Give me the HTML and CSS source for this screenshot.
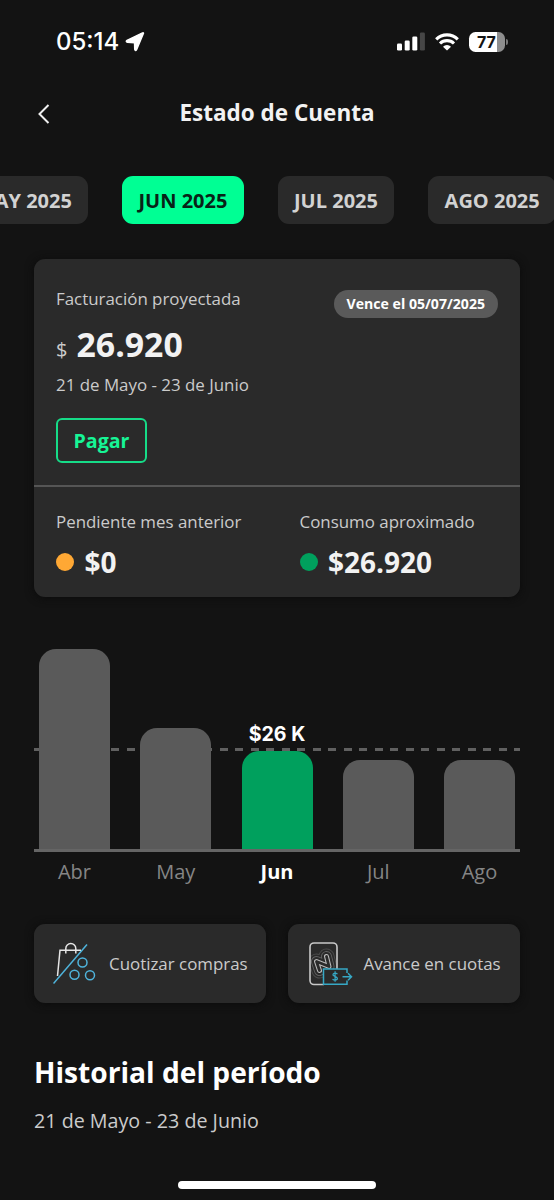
FILE: index.html
```
<!DOCTYPE html>
<html lang="es">
<head>
<meta charset="utf-8">
<title>Estado de Cuenta</title>
<link rel="stylesheet" href="styles.css">
</head>
<body>
<div class="screen">
  <div class="status">
    <span class="time">05:14</span>
    <svg class="loc" width="20" height="20" viewBox="0 0 20 20"><path d="M18.400 1.600 L11.600 17.700 Q10.400 19.600 9.700 17.400 L9.500 10.700 L2.300 10.400 Q0.400 9.400 2 8.300 L17 1.100 Q18.900 0.300 18.400 1.600Z" fill="#fff" stroke="#fff" stroke-width="1.400" stroke-linejoin="round"/></svg>
    <svg class="signal" width="28" height="20" viewBox="0 0 28 20"><g fill="#fff"><rect x="0" y="11.500" width="5" height="7" rx="1.300"/><rect x="7.700" y="8.500" width="5" height="10" rx="1.300"/><rect x="15.300" y="4.500" width="5" height="14" rx="1.300"/></g><rect x="22.900" y="0.500" width="5" height="18" rx="1.300" fill="#464646"/></svg>
    <svg class="wifi" width="24" height="18" viewBox="0 0 24 18"><g fill="none" stroke="#fff" stroke-width="3.100"><path d="M1.200 6.300 A15.400 15.400 0 0 1 22.800 6.300"/><path d="M5 10.500 A10 10 0 0 1 19 10.500"/></g><path d="M12 17.600 L8 13.700 A5.600 5.600 0 0 1 16 13.700Z" fill="#fff"/></svg>
    <div class="battery"><span>77</span></div>
    <i class="nub"></i>
  </div>

  <header class="header">
    <svg class="back" width="12" height="20" viewBox="0 0 12 20"><path d="M10.500 1 L1.500 10 L10.500 19" fill="none" stroke="#f0f0f0" stroke-width="2"/></svg>
    <h1>Estado de Cuenta</h1>
  </header>

  <nav class="months">
    <span class="chip">MAY 2025</span>
    <span class="chip active">JUN 2025</span>
    <span class="chip">JUL 2025</span>
    <span class="chip">AGO 2025</span>
  </nav>

  <section class="card">
    <div class="summary">
      <div class="main">
        <div class="label projected">Facturación proyectada</div>
        <div class="total"><small>$</small><b>26.920</b></div>
        <div class="label period">21 de Mayo - 23 de Junio</div>
        <button class="pay">Pagar</button>
      </div>
      <span class="due">Vence el 05/07/2025</span>
    </div>
    <div class="detail">
      <div><div class="label pending">Pendiente mes anterior</div><div class="value"><i class="dot orange"></i>$0</div></div>
      <div><div class="label approx">Consumo aproximado</div><div class="value"><i class="dot green"></i>$26.920</div></div>
    </div>
  </section>

  <section class="chart">
    <div class="plot">
      <div class="average"></div>
      <div class="bar" style="height:200px"></div>
      <div class="bar" style="height:121px"></div>
      <div class="bar current" style="height:98.500px"><span class="amount">$26 K</span></div>
      <div class="bar" style="height:89.500px"></div>
      <div class="bar" style="height:89.500px"></div>
    </div>
    <div class="axis"><span>Abr</span><span>May</span><b>Jun</b><span>Jul</span><span>Ago</span></div>
  </section>

  <section class="actions">
    <div class="action">
      <svg width="44" height="44" viewBox="0 0 44 44" fill="none" stroke-width="1.500"><g stroke="#e6e6e6"><path d="M4.500 34 L7 8.200 H28"/><path d="M12.800 11.500 V6.500 a5 5 0 0 1 10 0 V11.500"/></g><g stroke="#4fb4dc"><path d="M0.500 41.500 L34 2.500"/><circle cx="29.500" cy="20.500" r="4.500"/><circle cx="21.500" cy="32.700" r="4.500"/><circle cx="37" cy="33.200" r="4.500"/></g></svg>
      <span>Cuotizar compras</span>
    </div>
    <div class="action advance">
      <svg width="44" height="44" viewBox="0 0 44 44" fill="none"><defs><clipPath id="phone"><rect x="1" y="1" width="27" height="42" rx="4"/></clipPath></defs><g clip-path="url(#phone)" stroke-linecap="round" stroke-linejoin="round"><path d="M10.500 28.500 L7.500 19.500 L20 24.500 L17.500 14.500" stroke="#4c4c4c" stroke-width="16"/><path d="M10.500 28.500 L7.500 19.500 L20 24.500 L17.500 14.500" stroke="#2a2a2a" stroke-width="14.200"/><path d="M10.500 28.500 L7.500 19.500 L20 24.500 L17.500 14.500" stroke="#606060" stroke-width="11"/><path d="M10.500 28.500 L7.500 19.500 L20 24.500 L17.500 14.500" stroke="#2a2a2a" stroke-width="9.200"/><path d="M10.500 28.500 L7.500 19.500 L20 24.500 L17.500 14.500" stroke="#b8b8b8" stroke-width="5"/><path d="M10.500 28.500 L7.500 19.500 L20 24.500 L17.500 14.500" stroke="#2a2a2a" stroke-width="2.800"/></g><path d="M15 42.500 H5 a4 4 0 0 1 -4 -4 V5 a4 4 0 0 1 4 -4 H24 a4 4 0 0 1 4 4 V27" stroke="#c8c8c8" stroke-width="1.600"/><path d="M38 31 V27 H14.500 V42.300 H38 V38.500" fill="#2a2a2a" stroke="#36a8c5" stroke-width="1.500"/><path d="M33.500 34.700 H42.500 M39 31.200 L42.500 34.700 L39 38.200" stroke="#36a8c5" stroke-width="1.500"/><path d="M28.500 32.100 Q26 30.300 24.200 32 C22.500 34.300 29 34.300 28.400 37 Q26.200 39.300 23.500 37.300 M26.100 29.300 V39.800" stroke="#36a8c5" stroke-width="1.200"/></svg>
      <span>Avance en cuotas</span>
    </div>
  </section>

  <section class="history">
    <h2>Historial del período</h2>
    <p>21 de Mayo - 23 de Junio</p>
  </section>
  <div class="home"></div>
</div>
</body>
</html>
```
FILE: styles.css
```
* { box-sizing: border-box; }
html, body { margin: 0; background: #131313; }
body { font-family: "Open Sans", sans-serif; color: #f2f2f2; }
.screen { width: 554px; height: 1200px; overflow: hidden; display: flex; flex-direction: column; }

.status { height: 82px; display: flex; align-items: center; padding: 1px 46px 0 56px; flex: none; }
.time { font: 500 24px/30px Inter, sans-serif; color: #fff; letter-spacing: 0; width: 68.500px; white-space: nowrap; }
.loc { margin-right: auto; }
.signal { margin-right: 10px; }
.wifi { margin-right: 10px; }
.battery { width: 36px; height: 20px; border-radius: 6.500px; background: linear-gradient(90deg, #fff 27.500px, #8e8e8e 27.500px); color: #131313; font: 700 16px/20px Inter, sans-serif; padding-left: 8px; }
.nub { width: 2px; height: 6px; border-radius: 0 2px 2px 0; background: #777; margin-left: 1px; }

.header { height: 61px; display: grid; grid-template-columns: 40px 1fr 40px; align-items: center; padding: 0 37px; flex: none; }
.back { margin: 3px 0 0 1px; }
.header h1 { margin: 1px 0 0; font-size: 22.500px; line-height: 30px; font-weight: 700; text-align: center; white-space: nowrap; }

.months { display: flex; gap: 34px; justify-content: flex-start; margin: 33px 0 0 -40.500px; flex: none; }
.chip { flex: none; height: 48px; padding: 0 16.300px; border-radius: 11px; background: #2a2a2a; color: #d2d2d2; font-size: 20px; line-height: 49px; font-weight: 700; white-space: nowrap; }
.chip.active { background: #00ff94; color: #082217; }

.card { margin: 35px 34px 0; height: 338px; border-radius: 11px; background: #2a2a2a; box-shadow: 0 1px 8px #0b0b0b; flex: none; }
.summary { height: 228px; padding: 27.500px 22px 0; display: flex; justify-content: space-between; border-bottom: 2px solid #555; }
.label { font-size: 16.900px; line-height: 24px; color: #cbcbcb; white-space: nowrap; }
.total { display: flex; align-items: baseline; height: 40px; margin: 13px 0 9px; line-height: 40px; }
.total small { font-size: 20px; color: #cbcbcb; width: 20.500px; }
.total b { font-size: 33.800px; }
.pay { display: block; width: 91px; height: 45px; margin-top: 21.500px; padding: 0; border: 2px solid #16dc88; border-radius: 6px; background: none; color: #16f596; font: 700 19.600px/42px "Open Sans", sans-serif; }
.due { margin-top: 3.500px; height: 28px; padding: 0 13px; border-radius: 14px; background: #5a5a5a; color: #fff; font-size: 14.100px; line-height: 27px; font-weight: 700; white-space: nowrap; }
.detail { display: grid; grid-template-columns: 243.500px 1fr; padding: 22.500px 22px 0; }
.value { display: flex; align-items: center; margin-top: 10px; font-size: 28px; line-height: 36px; font-weight: 700; }
.dot { width: 18px; height: 18px; border-radius: 50%; margin-right: 10.500px; }
.orange { background: #ffa834; }
.green { background: #00a05d; }

.chart { margin: 52px 34px 0; flex: none; }
.plot { position: relative; height: 203px; padding: 0 5px; border-bottom: 3px solid #656565; display: flex; align-items: flex-end; justify-content: space-between; }
.average { position: absolute; left: 0; right: 0; top: 98.500px; height: 3px; background: repeating-linear-gradient(90deg, #606060 0 7.700px, transparent 7.700px 15.500px); }
.bar { position: relative; width: 71px; border-radius: 17px 17px 0 0; background: #5a5a5a; }
.bar.current { background: #00a05d; }
.amount { position: absolute; left: -10px; right: -10px; top: -29px; text-align: center; font: 700 19.600px/24px Inter, sans-serif; color: #fff; }
.axis { display: flex; justify-content: space-between; padding: 5.500px 5px 0; font-size: 20px; line-height: 28px; color: #858585; }
.axis > * { width: 71px; text-align: center; }
.axis b { color: #fff; }

.actions { display: grid; grid-template-columns: 232px 232px; gap: 22px; margin: 38.500px 34px 0; flex: none; }
.action { height: 79px; border-radius: 11px; background: #2a2a2a; display: flex; align-items: center; padding-left: 19px; gap: 12px; font-size: 16.900px; color: #cbcbcb; white-space: nowrap; box-shadow: 0 1px 8px #0b0b0b; }
.advance { padding-left: 20.500px; gap: 11px; }

.history { margin: 49.500px 34px 0; flex: none; }
.history h2 { margin: 0; font-size: 28.150px; line-height: 38px; font-weight: 700; color: #fff; }
.history p { margin: 16.500px 0 0; font-size: 19.700px; line-height: 28px; color: #cbcbcb; }
.home { width: 198px; height: 8px; border-radius: 4px; background: #fff; margin: 46px 0 0 178px; flex: none; }
```
